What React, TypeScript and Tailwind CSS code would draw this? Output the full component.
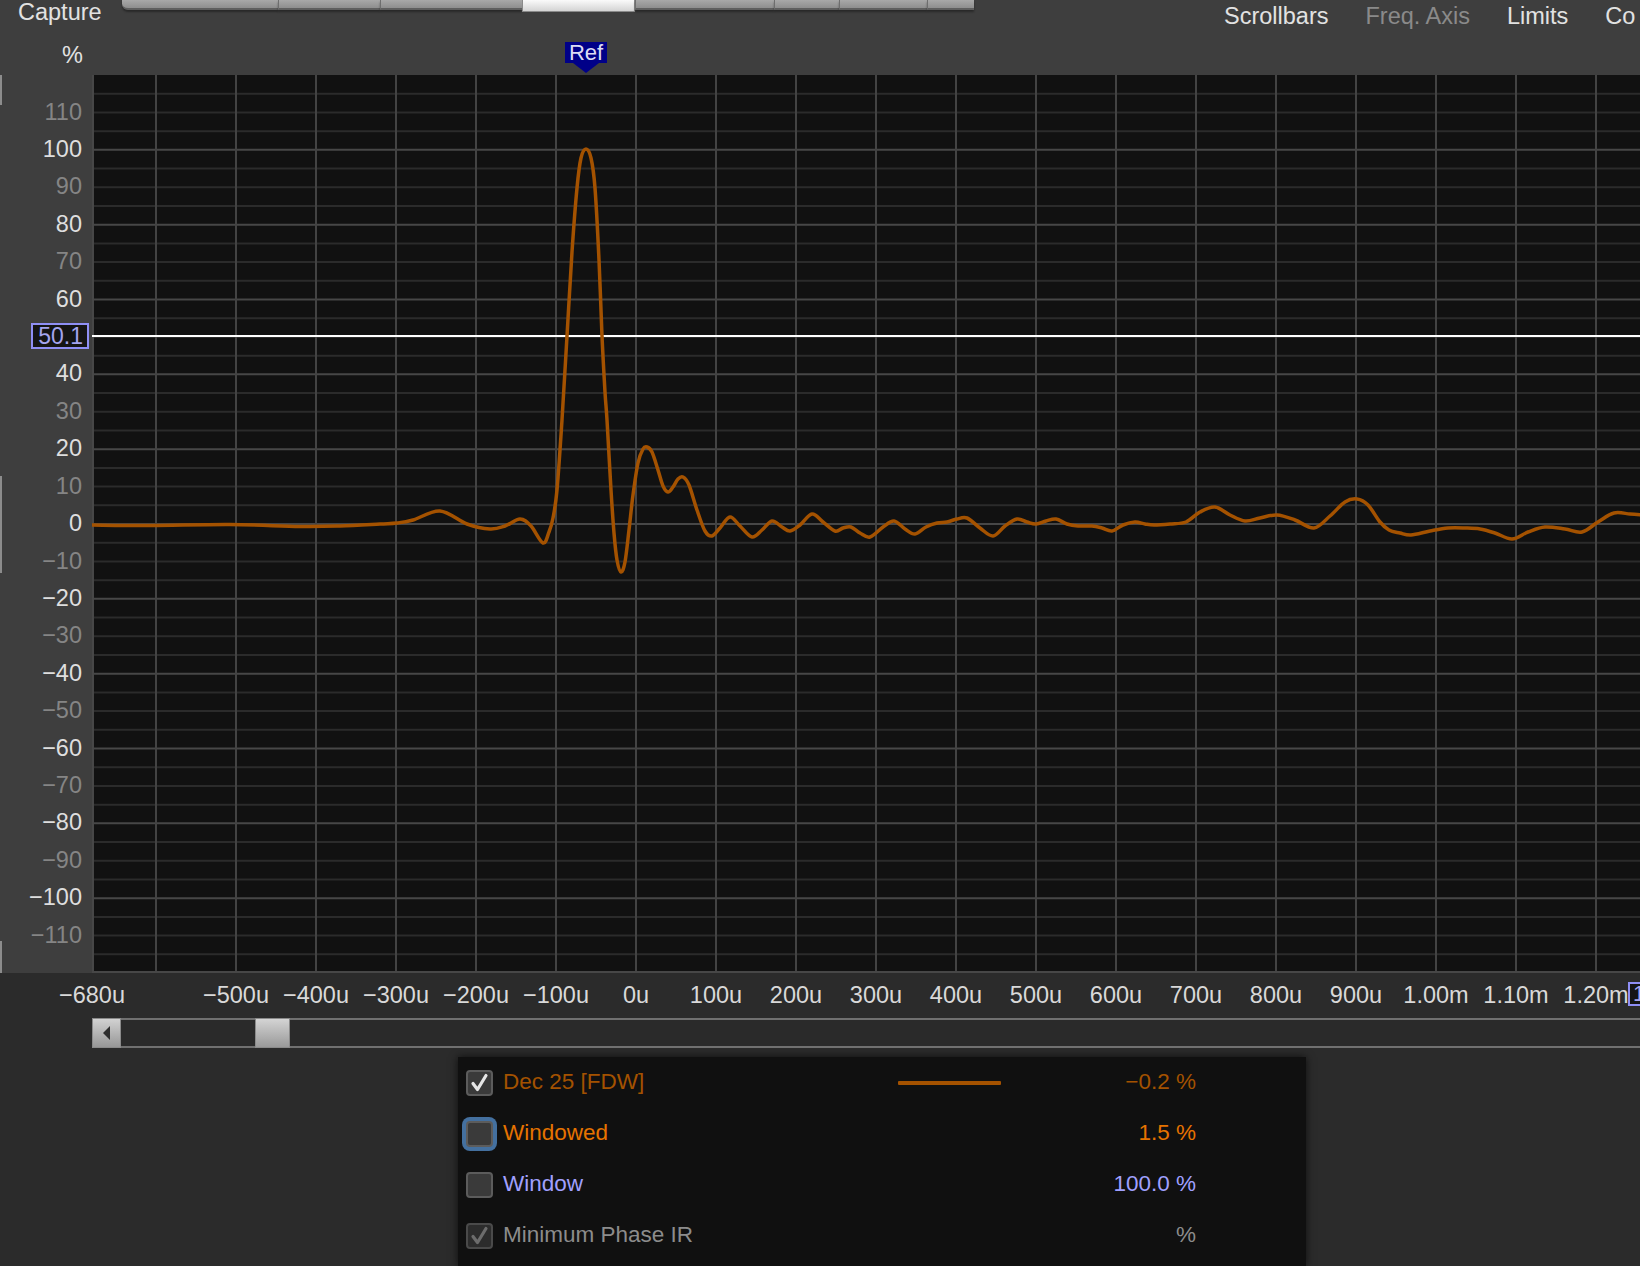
import React from "react";

const PLOT_W = 1548;
const PLOT_H = 898;
const PX = PLOT_H / 240;

const pagePts: [number, number][] = [
  [92, 525], [150, 525.5], [230, 524.5], [300, 526.5], [340, 526], [380, 524], [397, 523], [413, 520],
  [440, 511], [467, 524], [490, 529], [505, 526], [520, 519], [531, 526], [543, 543], [549, 532],
  [553, 518], [557, 490], [562, 420], [567, 336], [572, 252], [577, 188], [581, 158], [586, 149],
  [591, 158], [595, 188], [599, 260], [602, 336], [605, 392], [607, 420], [611, 490], [614, 533],
  [617, 560], [621, 572], [625, 562], [629, 530], [633, 495], [638, 463], [643, 449], [647, 447],
  [652, 452], [658, 470], [663, 486], [668, 492], [673, 487], [678, 479], [683, 477], [689, 485],
  [697, 510], [705, 531], [712, 536], [720, 528], [730, 517], [740, 526], [752, 537], [762, 530],
  [772, 521], [782, 527], [790, 531], [800, 525], [812, 514], [823, 522], [835, 531], [843, 528],
  [851, 527], [860, 533], [870, 537], [883, 527], [894, 521], [905, 529], [915, 534], [926, 527],
  [937, 523], [947, 522], [957, 519], [967, 518], [980, 528], [993, 536], [1005, 526], [1017, 519],
  [1027, 522], [1036, 524], [1046, 521], [1056, 519], [1067, 524], [1078, 526], [1092, 526],
  [1102, 528], [1112, 531], [1123, 525], [1135, 522], [1145, 524], [1154, 525], [1170, 524],
  [1186, 522], [1200, 512], [1215, 507], [1230, 515], [1245, 521], [1260, 518], [1277, 515],
  [1295, 520], [1314, 528], [1330, 516], [1345, 502], [1357, 499], [1368, 505], [1380, 522],
  [1389, 530], [1400, 533], [1411, 535], [1430, 531], [1448, 528], [1465, 528], [1480, 529],
  [1495, 533], [1512, 539], [1528, 532], [1545, 527], [1565, 529], [1582, 532], [1598, 522],
  [1614, 513], [1630, 514], [1642, 515],
];

function smoothPath(pts: [number, number][]): string {
  const p = pts.map(([x, y]) => [x - 92, y - 75] as [number, number]);
  let d = `M${p[0][0].toFixed(2)},${p[0][1].toFixed(2)}`;
  for (let i = 0; i < p.length - 1; i++) {
    const p0 = p[i - 1] || p[i];
    const p1 = p[i];
    const p2 = p[i + 1];
    const p3 = p[i + 2] || p2;
    const c1x = p1[0] + (p2[0] - p0[0]) / 6;
    const c1y = p1[1] + (p2[1] - p0[1]) / 6;
    const c2x = p2[0] - (p3[0] - p1[0]) / 6;
    const c2y = p2[1] - (p3[1] - p1[1]) / 6;
    d += ` C${c1x.toFixed(2)},${c1y.toFixed(2)} ${c2x.toFixed(2)},${c2y.toFixed(2)} ${p2[0].toFixed(2)},${p2[1].toFixed(2)}`;
  }
  return d;
}

const curveD = smoothPath(pagePts);

const yLabels: number[] = [];
for (let v = 110; v >= -110; v -= 10) yLabels.push(v);

const hLines: number[] = [];
for (let v = 115; v >= -115; v -= 5) hLines.push(v);

const xLabels = [
  "−500u", "−400u", "−300u", "−200u", "−100u", "0u", "100u", "200u", "300u", "400u",
  "500u", "600u", "700u", "800u", "900u", "1.00m", "1.10m", "1.20m",
];

const tabs = [
  { w: 156, sel: false, first: true },
  { w: 102, sel: false },
  { w: 142, sel: false },
  { w: 113, sel: true },
  { w: 139, sel: false },
  { w: 65, sel: false },
  { w: 88, sel: false },
  { w: 47, sel: false, last: true },
];

function fmt(v: number) {
  return v < 0 ? `−${Math.abs(v)}` : `${v}`;
}

function CheckMark({ color }: { color: string }) {
  return (
    <svg width="27" height="26" viewBox="0 0 27 26" className="absolute -left-[2px] -top-[2px]">
      <path d="M7 13.5 L11.5 19.5 L20 5.5" fill="none" stroke={color} strokeWidth="3.2" strokeLinecap="round" strokeLinejoin="round" />
    </svg>
  );
}

function Checkbox({ checked, disabled, focus }: { checked?: boolean; disabled?: boolean; focus?: boolean }) {
  const base = disabled
    ? "border-[#4a4a4a] bg-[#2c2c2c]"
    : "border-[#5c5c5c] bg-[#3a3a3a]";
  const ring = focus ? "shadow-[0_0_0_4px_#44709f]" : "";
  return (
    <div className={`relative w-[27px] h-[26px] shrink-0 rounded-[4px] border-2 ${base} ${ring}`}>
      {checked && <CheckMark color={disabled ? "#6c6c6c" : "#e6e6e6"} />}
    </div>
  );
}

function LegendRow({
  name,
  color,
  value,
  line,
  checked,
  disabled,
  focus,
}: {
  name: string;
  color: string;
  value: string;
  line?: boolean;
  checked?: boolean;
  disabled?: boolean;
  focus?: boolean;
}) {
  return (
    <div className="flex items-center h-[51px] pl-[8px]">
      <Checkbox checked={checked} disabled={disabled} focus={focus} />
      <div className="w-[405px] pl-[10px] text-[22.5px] leading-none whitespace-nowrap" style={{ color }}>
        {name}
      </div>
      <div className="w-[103px] h-[4px] flex items-center">
        {line && <div className="w-full h-[4px] bg-[#a45200] rounded-[1px]" />}
      </div>
      <div className="w-[195px] text-right text-[22.5px] leading-none whitespace-nowrap" style={{ color }}>
        {value}
      </div>
    </div>
  );
}

export default function App() {
  return (
    <div className="relative w-[1640px] h-[1266px] overflow-hidden bg-[#2b2b2b] font-['Liberation_Sans',Arial,sans-serif]">
      <div className="bg-[#3e3e3e]">
        {/* header */}
        <div className="h-[75px] flex flex-col">
          <div className="flex items-start h-[40px] whitespace-nowrap">
            <div className="w-[122px] shrink-0 pl-[18px] pt-[1px] text-[23.5px] leading-[23.5px] text-[#e2e2e2]">Capture</div>
            <div className="flex shrink-0 w-[852px] h-[12px] items-start">
              {tabs.map((t, i) =>
                t.sel ? (
                  <div
                    key={i}
                    className="h-[12px] shrink-0 bg-linear-to-b from-[#fafafa] to-[#d4d4d4] border-x border-b border-[#8a8a8a]"
                    style={{ width: t.w }}
                  />
                ) : (
                  <div
                    key={i}
                    className={`h-[10px] shrink-0 bg-linear-to-b from-[#a8a8a8] to-[#8e8e8e] border-b-2 border-[#5e5e5e] ${
                      t.first ? "rounded-bl-[6px]" : "border-l border-l-[#6e6e6e]"
                    } shadow-[0_2px_2px_rgba(0,0,0,0.35)]`}
                    style={{ width: t.w }}
                  />
                )
              )}
            </div>
            <div className="flex shrink-0 gap-[37px] ml-[250px] pt-[5px] text-[23.5px] leading-[23.5px]">
              <span className="text-[#e2e2e2]">Scrollbars</span>
              <span className="text-[#8a8a8a]">Freq. Axis</span>
              <span className="text-[#e2e2e2]">Limits</span>
              <span className="text-[#e2e2e2]">Co</span>
            </div>
          </div>
          <div className="w-[83px] pt-[4px] text-right text-[23.5px] leading-[23.5px] text-[#e2e2e2]">%</div>
        </div>

        {/* plot row */}
        <div className="flex h-[898px]">
          <div className="w-[92px] shrink-0 flex flex-col pt-[18.7px]">
            {yLabels.map((v) => (
              <div
                key={v}
                className="h-[37.417px] shrink-0 flex items-center justify-end pr-[10px] text-[23.5px] leading-[23.5px]"
                style={{ color: Math.abs(v) % 20 === 0 ? "#dedede" : "#858585" }}
              >
                {v === 50 ? "" : fmt(v)}
              </div>
            ))}
          </div>
          <div className="flex-1 bg-[#111111]">
            <svg width={PLOT_W} height={PLOT_H} viewBox={`0 0 ${PLOT_W} ${PLOT_H}`} className="block">
              {hLines.map((v) => {
                const y = (120 - v) * PX;
                const major = Math.abs(v) % 20 === 0;
                return (
                  <line key={`h${v}`} x1={0} x2={PLOT_W} y1={y} y2={y} stroke={major ? "#474747" : "#2b2b2b"} strokeWidth={2} />
                );
              })}
              {Array.from({ length: 19 }).map((_, k) => {
                const x = 64 + k * 80;
                return <line key={`v${k}`} x1={x} x2={x} y1={0} y2={PLOT_H} stroke="#434343" strokeWidth={2} />;
              })}
              <line x1={1} x2={1} y1={0} y2={PLOT_H} stroke="#474747" strokeWidth={2} />
              <line x1={0} x2={PLOT_W} y1={PLOT_H - 1} y2={PLOT_H - 1} stroke="#474747" strokeWidth={2} />
              <line x1={0} x2={PLOT_W} y1={261} y2={261} stroke="#ffffff" strokeWidth={2} />
              <path d={curveD} fill="none" stroke="#a45200" strokeWidth={3.5} strokeLinejoin="round" strokeLinecap="round" />
            </svg>
          </div>
        </div>
      </div>

      {/* x axis labels */}
      <div className="flex items-center h-[45px] whitespace-nowrap text-[23.5px] leading-[23.5px] text-[#d9d9d9]">
        <div className="w-[80px] ml-[52px] shrink-0 text-center">−680u</div>
        <div className="w-[64px] shrink-0" />
        {xLabels.map((l) => (
          <div key={l} className="w-[80px] shrink-0 text-center">
            {l}
          </div>
        ))}
      </div>

      {/* scrollbar */}
      <div className="flex h-[30px] ml-[92px]">
        <div className="w-[29px] shrink-0 h-full bg-linear-to-b from-[#d2d2d2] to-[#979797] border border-[#8a8a8a] flex items-center justify-center">
          <svg width="8" height="14" viewBox="0 0 8 14">
            <polygon points="7,0 7,14 0,7" fill="#2e2e2e" />
          </svg>
        </div>
        <div className="flex-1 flex border-y-2 border-[#707070] bg-[#2a2a2a]">
          <div className="w-[134px] shrink-0" />
          <div className="w-[35px] shrink-0 -my-[2px] bg-linear-to-b from-[#d4d4d4] to-[#9a9a9a] border border-[#8a8a8a]" />
        </div>
      </div>

      {/* legend panel */}
      <div className="ml-[458px] mt-[9px] w-[848px] h-[209px] bg-[#101010] shadow-[0_0_8px_rgba(0,0,0,0.7)]">
        <LegendRow name="Dec 25 [FDW]" color="#a45200" value="−0.2 %" line checked />
        <LegendRow name="Windowed" color="#e67300" value="1.5 %" focus />
        <LegendRow name="Window" color="#a0a0ff" value="100.0 %" />
        <LegendRow name="Minimum Phase IR" color="#8c8c8c" value="%" checked disabled />
      </div>

      {/* overlays */}
      <div className="absolute left-[565px] top-[42px] flex flex-col items-center">
        <div className="w-[42px] h-[21px] bg-[#000088] text-center text-[22px] leading-[21px] text-[#dcdcf4]">Ref</div>
        <svg width="26" height="10" viewBox="0 0 26 10" className="block">
          <polygon points="0,0 26,0 13,10" fill="#000088" />
        </svg>
      </div>

      <div className="absolute left-[31px] top-[323px] w-[58px] h-[26px] border-2 border-[#8f8ff5] bg-[#151515] flex items-center justify-end pr-[4px] text-[23px] leading-[23px] text-[#a4a4ee]">
        50.1
      </div>

      <div className="absolute left-[1628px] top-[982px] w-[14px] h-[24px] border-y-2 border-l-2 border-[#8f8ff5] bg-[#151515] overflow-hidden pl-[3px] text-[22px] leading-[20px] text-[#a4a4ee]">
        1
      </div>

      <div className="absolute left-0 top-[75px] w-[2px] h-[30px] bg-[#8c8c8c]" />
      <div className="absolute left-0 top-[476px] w-[2px] h-[97px] bg-[#8c8c8c]" />
      <div className="absolute left-0 top-[941px] w-[2px] h-[32px] bg-[#8c8c8c]" />
    </div>
  );
}
